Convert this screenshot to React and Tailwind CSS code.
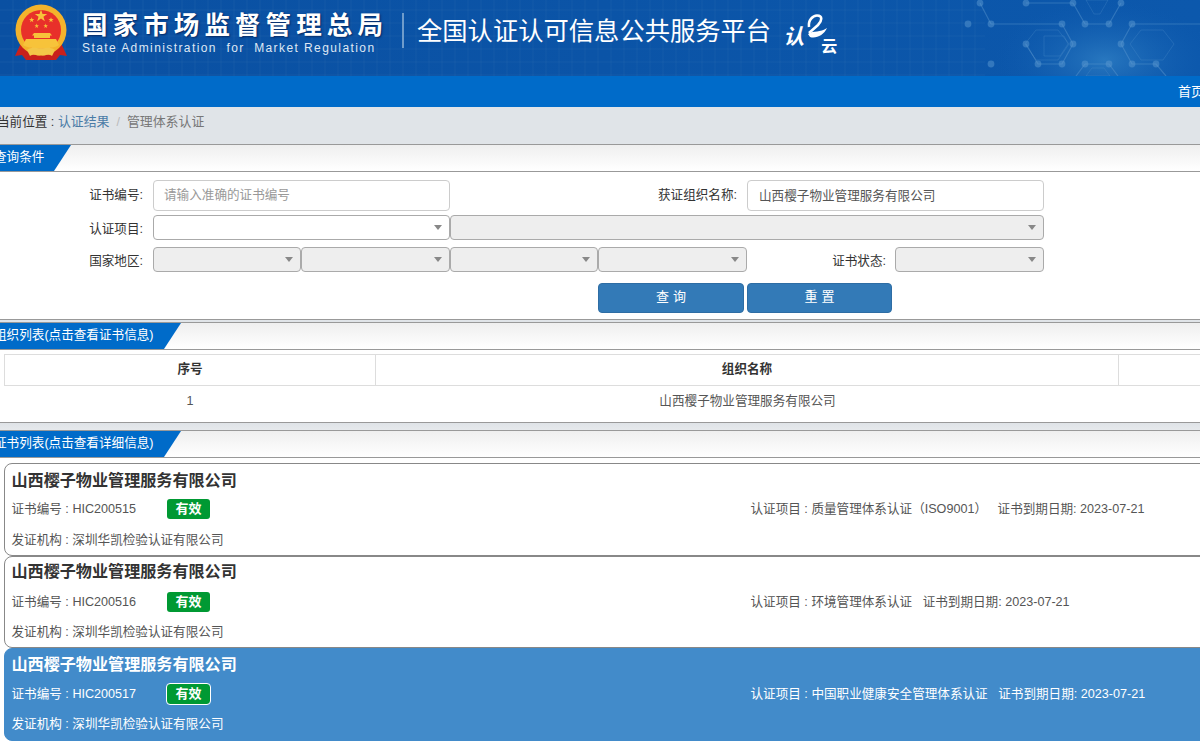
const Star = ({ x, y, r }) => {
  const pts = [];
  for (let i = 0; i < 10; i++) {
    const a = -Math.PI / 2 + (i * Math.PI) / 5;
    const d = i % 2 === 0 ? r : r * 0.4;
    pts.push((x + Math.cos(a) * d).toFixed(2) + "," + (y + Math.sin(a) * d).toFixed(2));
  }
  return <polygon points={pts.join(" ")} fill="#f7c33a" />;
};

const Emblem = () => (
  <svg width="56" height="60" viewBox="0 0 56 60" className="shrink-0">
    <path d="M8 40 L2 53 L9 52 L13 57 H43 L47 52 L54 53 L48 40 Z" fill="#c8201c" />
    <circle cx="28" cy="27" r="25.5" fill="#f3b32c" />
    <circle cx="28" cy="27" r="20" fill="#e8302a" />
    <Star x={28} y={13} r={6.5} />
    <Star x={18.7} y={17} r={2.8} />
    <Star x={38} y={17} r={2.8} />
    <Star x={23.7} y={23} r={2.4} />
    <Star x={32.7} y={23} r={2.4} />
    <path d="M21 30 H37 L39 32.5 H37 V35 H21 V32.5 H19 Z" fill="#f7c33a" />
    <path d="M13 36 H43 L46 42 C38 47 18 47 10 42 Z" fill="#f7c33a" />
    <path d="M14 47 C20 43 25 46 28 45 C31 46 36 43 42 47 L39 53 C34 50 31 54 28 52 C25 54 22 50 17 53 Z" fill="#f3c648" />
  </svg>
);

const HeaderPattern = () => {
  const grid = [];
  for (let x = 13; x < 985; x += 13) grid.push(x);
  const rows = [];
  for (let y = 10; y < 76; y += 13) rows.push(y);
  const nodes = [
    [980, 3], [1026, 3], [1073, 3], [1121, 3], [991, 24], [1062, 24], [1085, 24], [1109, 24], [1132, 24],
    [1026, 44], [1073, 44], [1121, 44], [968, 24], [991, 64], [1038, 64], [1062, 64], [1085, 64], [1109, 64], [1132, 64], [1156, 64],
  ];
  return (
    <svg width="1200" height="76" viewBox="0 0 1200 76" className="absolute left-0 top-0">
      <defs>
        <radialGradient id="glow" cx="50%" cy="50%" r="50%">
          <stop offset="0%" stopColor="#2f7fc4" stopOpacity="0.8" />
          <stop offset="100%" stopColor="#0f5bb0" stopOpacity="0" />
        </radialGradient>
      </defs>
      <ellipse cx="1105" cy="60" rx="110" ry="60" fill="url(#glow)" />
      {grid.map((x) => (
        <line key={x} x1={x} y1="0" x2={x} y2="76" stroke="#3b78bb" strokeOpacity="0.2" />
      ))}
      {rows.map((y) => (
        <line key={y} x1="0" y1={y} x2="985" y2={y} stroke="#3b78bb" strokeOpacity="0.2" />
      ))}
      <path
        d="M1026 3H1073M1073 3L1085 24M1121 3L1109 24M1085 24H1109M991 24H1062L1073 44M1026 44L1038 64H1062L1073 44M1121 44L1132 24H1200M1121 44L1132 64H1156L1166 76M1085 64H1109L1118 76M1085 64L1076 76M980 3L991 24"
        fill="none"
        stroke="#5a97cf"
        strokeOpacity="0.45"
        strokeWidth="1.2"
      />
      <path
        d="M1036 30H1058L1069 44L1058 60H1036L1025 44ZM1141 30H1163L1174 44L1163 60H1141L1130 44ZM1086 0H1108L1100 14H1094ZM1086 76L1092 68H1104L1110 76ZM1044 36H1064L1068 44L1060 56H1044Z"
        fill="none"
        stroke="#5a97cf"
        strokeOpacity="0.25"
      />
      {nodes.map(([x, y]) => (
        <circle key={x + "-" + y} cx={x} cy={y} r="3.4" fill="#5a97cf" fillOpacity="0.5" />
      ))}
    </svg>
  );
};

const CloudLogo = () => (
  <div className="flex items-start ml-[12px] w-[57px] h-[50px] text-white">
    <span className="text-[21px] leading-none italic font-bold font-['Noto_Sans_CJK_SC',sans-serif] mt-[22px]">认</span>
    <svg width="24" height="26" viewBox="0 0 24 26" className="mt-[11px] shrink-0">
      <path d="M5 13 C4 6 9 1.5 13 1.5 C19 1.5 18 7 14 11 L5 19" fill="none" stroke="#fff" strokeWidth="2.6" />
      <path d="M4 20 C10 16 16 19 23 14 C20 21 12 25 6 23 Z" fill="#fff" />
    </svg>
    <span className="text-[16px] leading-none -ml-[7px] mt-[34px] font-bold font-['Noto_Sans_CJK_SC',sans-serif]">云</span>
  </div>
);

const Select = ({ className = "", disabled = true }) => (
  <div
    className={
      "h-full relative rounded-[4px] border border-[#aaa] " +
      (disabled ? "bg-[#eee] " : "bg-white ") +
      className
    }
  >
    <span className="absolute right-[7px] top-1/2 -mt-[3px] border-x-[4px] border-x-transparent border-t-[5px] border-t-[#888]" />
  </div>
);

const SectionTitle = ({ title, tabWidth }) => (
  <div className="h-[28px] border-y border-[#999] bg-gradient-to-b from-[#efefef] to-white">
    <div
      className={
        "h-full bg-[#006bc9] text-white pl-[10px] leading-[24px] [clip-path:polygon(0_0,100%_0,calc(100%-17px)_100%,0_100%)] " +
        tabWidth
      }
    >
      {title}
    </div>
  </div>
);

const certs = [
  {
    no: "HIC200515",
    project: "质量管理体系认证（ISO9001）",
    box: "h-[93px] pt-[5px]",
    line2: "mt-[7px]",
    line3: "mt-[9px]",
  },
  {
    no: "HIC200516",
    project: "环境管理体系认证",
    box: "h-[92px] pt-[3px]",
    line2: "mt-[9px]",
    line3: "mt-[8px]",
  },
  {
    no: "HIC200517",
    project: "中国职业健康安全管理体系认证",
    box: "h-[93px] pt-[4px]",
    line2: "mt-[8px]",
    line3: "mt-[8px]",
    active: true,
  },
];

const CertCard = ({ no, project, box, line2, line3, active }) => (
  <div
    className={
      "ml-[20px] pl-[6.5px] rounded-[8px] border flex flex-col " +
      box +
      (active ? " bg-[#428bca] border-[#428bca] text-white" : " bg-white border-[#888] text-[#555]")
    }
  >
    <div className={"text-[16.1px] leading-[22px] font-bold " + (active ? "text-white" : "text-[#333]")}>
      山西樱子物业管理服务有限公司
    </div>
    <div className={"flex items-center h-[22px] " + line2}>
      <div className="w-[155.5px]">证书编号 : {no}</div>
      <div
        className={
          "h-[20px] w-[43px] rounded-[3px] bg-[#009933] text-white text-[13px] font-bold leading-[20px] text-center " +
          (active ? "outline outline-1 outline-white" : "")
        }
      >
        有效
      </div>
      <div className="ml-[540.5px] flex">
        <span>认证项目 : {project}</span>
        <span className="ml-[10.5px]">证书到期日期: 2023-07-21</span>
      </div>
    </div>
    <div className={"leading-[22px] " + line3}>发证机构 : 深圳华凯检验认证有限公司</div>
  </div>
);

export default function App() {
  return (
    <div className="w-[1200px] h-[741px] overflow-hidden bg-white text-[12.6px] text-[#333] font-['Liberation_Sans','Noto_Sans_CJK_SC',sans-serif]">
      <header className="relative h-[76px] bg-gradient-to-r from-[#0a50a2] to-[#0c58ac] overflow-hidden text-white">
        <HeaderPattern />
        <div className="relative flex items-start pl-[13px] pt-[3px]">
          <Emblem />
          <div className="ml-[13px] w-[320px]">
            <div className="text-[25.5px] leading-[36px] mt-[2px] font-bold tracking-[5.1px] whitespace-nowrap font-['Noto_Sans_CJK_SC',sans-serif] [text-shadow:1px_1px_2px_rgba(0,20,70,0.7)]">
              国家市场监督管理总局
            </div>
            <div className="text-[12px] leading-[14px] tracking-[1.41px] whitespace-pre text-[#dfe8f4]">
              State Administration  for  Market Regulation
            </div>
          </div>
          <div className="w-[2px] h-[35px] mt-[10px] bg-[#6f9ccb]" />
          <div className="ml-[13px] mt-[8px] text-[25.3px] leading-[36px] whitespace-nowrap font-['Noto_Sans_CJK_SC',sans-serif]">
            全国认证认可信息公共服务平台
          </div>
          <CloudLogo />
        </div>
      </header>

      <nav className="h-[31px] bg-[#006bc9] text-white text-[13px] leading-[31px] pl-[1178px] whitespace-nowrap">
        首页
      </nav>

      <div className="-ml-[16px] w-[1500px]">
        <div className="h-[37px] bg-[#e0e4e8] pl-[13px] pt-[6px] leading-[18px] flex">
          <span>当前位置 :&nbsp;</span>
          <span className="text-[#4a7ba6] text-[12.9px]">认证结果</span>
          <span className="text-[#bbb] mx-[7px]">/</span>
          <span className="text-[#777] text-[12.9px]">管理体系认证</span>
        </div>

        <SectionTitle title="查询条件" tabWidth="w-[87px]" />

        <div className="h-[147px] pt-[8px]">
          <div className="flex h-[31px] items-center">
            <div className="w-[159px] text-right">证书编号:</div>
            <input
              readOnly
              placeholder="请输入准确的证书编号"
              className="ml-[10px] w-[297px] h-full border border-[#ccc] rounded-[4px] px-[10px] pb-[2px] placeholder:text-[#999] outline-none"
            />
            <div className="w-[287px] text-right">获证组织名称:</div>
            <input
              readOnly
              value="山西樱子物业管理服务有限公司"
              className="ml-[10px] w-[297px] h-full border border-[#ccc] rounded-[4px] px-[11px] pb-[2px] text-[#555] outline-none"
            />
          </div>
          <div className="flex h-[25px] items-center mt-[4px]">
            <div className="w-[159px] text-right pt-[3px]">认证项目:</div>
            <Select className="ml-[10px] w-[297px]" disabled={false} />
            <Select className="w-[594px]" />
          </div>
          <div className="flex h-[25px] items-center mt-[7px]">
            <div className="w-[159px] text-right pt-[3px]">国家地区:</div>
            <Select className="ml-[10px] w-[148px]" />
            <Select className="w-[149px]" />
            <Select className="w-[148px]" />
            <Select className="w-[149px]" />
            <div className="w-[139px] text-right pt-[3px]">证书状态:</div>
            <Select className="ml-[9px] w-[149px]" />
          </div>
          <div className="flex h-[30px] mt-[11px] pl-[614px]">
            <button className="w-[146px] h-full pb-[2px] pl-[4px] rounded-[4px] bg-[#337ab7] border border-[#2e6da4] text-white text-[13px] tracking-[4px]">
              查询
            </button>
            <button className="ml-[3px] w-[145px] h-full pb-[2px] pl-[4px] rounded-[4px] bg-[#337ab7] border border-[#2e6da4] text-white text-[13px] tracking-[4px]">
              重置
            </button>
          </div>
        </div>

        <div className="h-[3px] bg-[#e0e4e8] border-t border-[#999]" />
        <SectionTitle title="组织列表(点击查看证书信息)" tabWidth="w-[197px]" />

        <div className="h-[72px] pt-[4px] ml-[20px]">
          <div className="flex h-[32px] border border-[#ddd] font-bold leading-[29px] text-center">
            <div className="w-[371px] border-r border-[#ddd]">序号</div>
            <div className="w-[743px] border-r border-[#ddd]">组织名称</div>
            <div className="flex-1" />
          </div>
          <div className="flex h-[30px] leading-[30px] text-center text-[#555]">
            <div className="w-[372px]">1</div>
            <div className="w-[743px]">山西樱子物业管理服务有限公司</div>
          </div>
        </div>

        <div className="h-[8px] bg-gradient-to-b from-[#dfe3e7] to-[#e6e9ec] border-t border-[#999]" />
        <SectionTitle title="证书列表(点击查看详细信息)" tabWidth="w-[197px]" />

        <div className="pt-[5px] w-[1500px]">
          {certs.map((c) => (
            <CertCard key={c.no} {...c} />
          ))}
        </div>
      </div>
    </div>
  );
}
